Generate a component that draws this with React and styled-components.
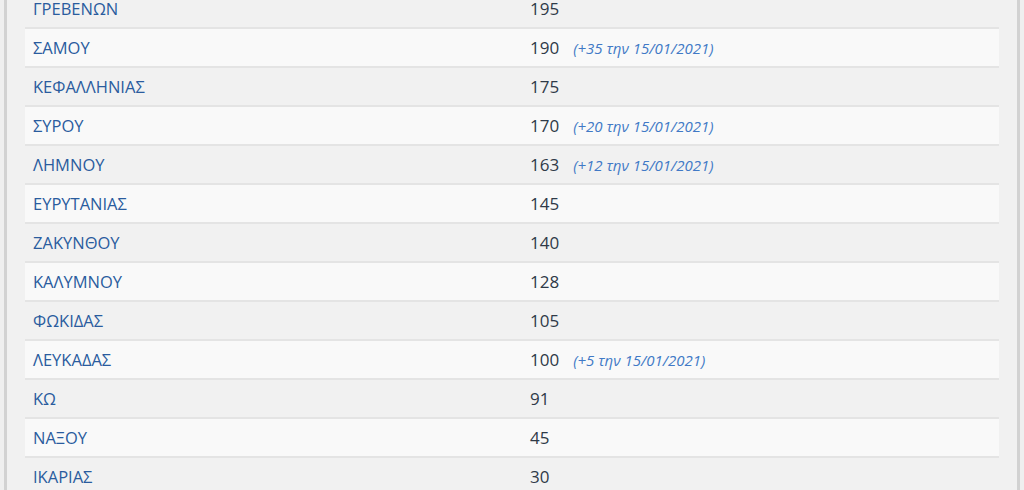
import React from 'react'
import styled, { createGlobalStyle } from 'styled-components'

const Global = createGlobalStyle`
  html, body {
    margin: 0;
    padding: 0;
    background: #efefef;
    overflow: hidden;
  }
  body {
    font-family: "Open Sans", "Liberation Sans", sans-serif;
  }
`

const Page = styled.div`
  margin: 0 4px;
  height: 490px;
  overflow: hidden;
  background: #f1f1f1;
  border-left: 3px solid #d2d2d2;
  border-right: 3px solid #d2d2d2;
  padding: 0 18px;
`

const Table = styled.div`
  margin-top: -12px;
  display: flex;
  flex-direction: column;
`

const Row = styled.div`
  display: grid;
  grid-template-columns: 497px 1fr;
  align-items: center;
  height: 37px;
  border-top: 2px solid #e4e4e4;
  background: ${(p) => (p.$odd ? '#f9f9f9' : '#f1f1f1')};
`

const Name = styled.div`
  padding: 0 8px;
  font-size: 16.5px;
  color: #2a5c9e;
`

const Value = styled.div`
  padding: 0 8px;
  display: flex;
  align-items: baseline;
  gap: 14px;
  font-size: 17px;
  color: #2f3a48;
`

const Note = styled.span`
  font-size: 15px;
  font-style: italic;
  color: #4179c6;
`

const rows = [
  ['ΓΡΕΒΕΝΩΝ', 195],
  ['ΣΑΜΟΥ', 190, '(+35 την 15/01/2021)'],
  ['ΚΕΦΑΛΛΗΝΙΑΣ', 175],
  ['ΣΥΡΟΥ', 170, '(+20 την 15/01/2021)'],
  ['ΛΗΜΝΟΥ', 163, '(+12 την 15/01/2021)'],
  ['ΕΥΡΥΤΑΝΙΑΣ', 145],
  ['ΖΑΚΥΝΘΟΥ', 140],
  ['ΚΑΛΥΜΝΟΥ', 128],
  ['ΦΩΚΙΔΑΣ', 105],
  ['ΛΕΥΚΑΔΑΣ', 100, '(+5 την 15/01/2021)'],
  ['ΚΩ', 91],
  ['ΝΑΞΟΥ', 45],
  ['ΙΚΑΡΙΑΣ', 30],
]

export default function App() {
  return (
    <Page>
      <Global />
      <Table>
        {rows.map(([name, value, note], i) => (
          <Row key={name} $odd={i % 2 === 1}>
            <Name>{name}</Name>
            <Value>
              {value}
              {note && <Note>{note}</Note>}
            </Value>
          </Row>
        ))}
      </Table>
    </Page>
  )
}
